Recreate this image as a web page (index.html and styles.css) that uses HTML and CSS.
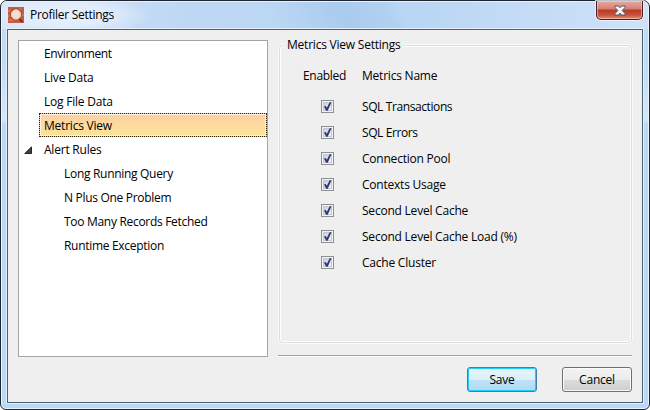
FILE: index.html
```html
<!DOCTYPE html>
<html lang="en">
<head>
<meta charset="utf-8">
<title>Profiler Settings</title>
<link rel="stylesheet" href="styles.css">
</head>
<body>
<svg class="defs" width="0" height="0">
  <linearGradient id="boxfill" x1="0" y1="0" x2="1" y2="1"><stop offset="0" stop-color="#c5cad2"/><stop offset="1" stop-color="#fafafa"/></linearGradient>
  <symbol id="check" viewBox="0 0 13 13">
    <rect x=".5" y=".5" width="12" height="12" fill="#f4f4f4" stroke="#8e8f8f"/>
    <rect x="2.5" y="2.5" width="8" height="8" fill="url(#boxfill)" stroke="#c4c8ce"/>
    <path d="M3 6.6l1.7-.6 1.2 1.7 2.6-5.2 2.1-.5-3.9 8.7H5.1z" fill="#31347c"/>
  </symbol>
</svg>
<div class="window">
  <header class="titlebar">
    <svg class="app-icon" width="16" height="16" viewBox="0 0 16 16">
      <rect width="16" height="16" fill="#cf5a36"/>
      <path d="M0 4h3M0 9h2M12 1v3M13 8h3M1 13h6" stroke="#e98b60"/>
      <path d="M11.5 12l3 3" stroke="#563c35" stroke-width="1.8"/>
      <circle cx="8" cy="7.5" r="5.6" fill="#f9dccb" stroke="#8e5145" stroke-width="1.2"/>
      <circle cx="8" cy="7.5" r="4.7" fill="none" stroke="#e9c3b2"/>
    </svg>
    <h1>Profiler Settings</h1>
    <div class="close">
      <svg width="12" height="11" viewBox="0 0 12 11"><path d="M1 1h3.4L6 2.8 7.6 1H11v1.5L8.2 5.5 11 8.5V10H7.6L6 8.2 4.4 10H1V8.5l2.8-3L1 2.5z" fill="#f7f7f7" stroke="#535666"/></svg>
    </div>
  </header>
  <main class="client">
    <nav class="tree">
      <div class="item"><span class="tight">Environment</span></div>
      <div class="item"><span>Live Data</span></div>
      <div class="item"><span>Log File Data</span></div>
      <div class="item selected"><span>Metrics View</span></div>
      <div class="item parent"><svg width="8" height="8" viewBox="0 0 8 8"><path d="M7.5.8v6.7H.8z" fill="#404040" stroke="#262626"/></svg><span>Alert Rules</span></div>
      <div class="item child"><span>Long Running Query</span></div>
      <div class="item child"><span>N Plus One Problem</span></div>
      <div class="item child"><span>Too Many Records Fetched</span></div>
      <div class="item child"><span>Runtime Exception</span></div>
    </nav>
    <section class="content">
      <fieldset class="group">
        <legend>Metrics View Settings</legend>
        <div class="row head"><span>Enabled</span><span>Metrics Name</span></div>
        <div class="row"><svg class="check"><use href="#check"/></svg><span class="tight">SQL Transactions</span></div>
        <div class="row"><svg class="check"><use href="#check"/></svg><span class="tight">SQL Errors</span></div>
        <div class="row"><svg class="check"><use href="#check"/></svg><span>Connection Pool</span></div>
        <div class="row"><svg class="check"><use href="#check"/></svg><span>Contexts Usage</span></div>
        <div class="row"><svg class="check"><use href="#check"/></svg><span>Second Level Cache</span></div>
        <div class="row"><svg class="check"><use href="#check"/></svg><span>Second Level Cache Load (%)</span></div>
        <div class="row"><svg class="check"><use href="#check"/></svg><span>Cache Cluster</span></div>
      </fieldset>
      <div class="rule"></div>
      <div class="buttons"><button class="save">Save</button><button>Cancel</button></div>
    </section>
  </main>
</div>
</body>
</html>
```
FILE: styles.css
```css
* { box-sizing: border-box; }
body {
  margin: 0;
  background: #fff;
  color: #000;
  font: 12px/16px "Open Sans", "Noto Sans", sans-serif;
  letter-spacing: -0.22px;
}
.defs { position: absolute; }
.window {
  width: 650px;
  height: 410px;
  padding: 0 6px 6px;
  border: 1px solid #20242e;
  border-radius: 7px 7px 6px 6px;
  background: linear-gradient(#c4dcf6 0, #bfdbf8 60px, #d5e7fa 118px, #b9d9fb 124px, #b9d9fb 100%);
  box-shadow: inset 0 0 0 1px #eef6fd;
}
.titlebar {
  display: flex;
  align-items: flex-start;
  height: 28px;
  margin: 0 -5px;
  padding: 0 5px;
  background:
    radial-gradient(ellipse 90px 22px at 60px 14px, #e8f1fc 0, #e1edfb 50%, transparent 100%),
    linear-gradient(65deg, transparent 42%, #a9cbef 53%, #b2d1f1 60%, transparent 62%),
    linear-gradient(90deg, #d0e2f7 0, #bdd7f4 30%, #bad6f4 65%, #cfe2f8 100%);
}
.titlebar { box-shadow: inset 0 1px #e8f2fd; border-radius: 5px 5px 0 0; }
.app-icon { margin: 6px 0 0 1px; }
h1 {
  margin: 5px 0 0 6px;
  font-size: 12px;
  line-height: 17px;
  font-weight: 400;
  letter-spacing: -0.28px;
}
.close {
  display: flex;
  justify-content: center;
  align-items: center;
  width: 47px;
  height: 19px;
  margin: 0 0 0 auto;
  border: 1px solid #4b1d24;
  border-top: 0;
  border-radius: 0 0 5px 5px;
  background: linear-gradient(#e6aaa0 0, #d77f73 8px, #b93b27 9px, #c8503a 14px, #e29073 18px);
  box-shadow: inset 0 0 0 1px rgba(255,220,210,.5), 0 0 0 1px rgba(240,247,255,.75);
}
.client {
  display: flex;
  height: 374px;
  padding: 10px;
  border: 1px solid #4b626f;
  background: #efefef;
  box-shadow: 0 0 0 1px #e4f1fc;
}
.tree {
  width: 250px;
  height: 317px;
  border: 1px solid #a5a5a5;
  background: #fff;
}
.item {
  display: flex;
  align-items: center;
  height: 24px;
  padding: 2px 0 0 25px;
  white-space: pre;
}
.selected {
  margin-left: 20px;
  padding-left: 4px;
  border: 1px dotted #302204;
  background: linear-gradient(#ffd0a6, #fae496) padding-box, #f2c94a border-box;
  box-shadow: inset 0 0 0 1px #fff3dc;
}
.parent { padding-left: 5px; }
.parent svg { margin: -1px 12px 0 0; }
.child { padding-left: 45px; letter-spacing: -0.3px; }
.tight { letter-spacing: -0.4px; }
.content {
  width: 354px;
  margin-left: 10px;
}
.group {
  height: 306px;
  margin: -3px 0 0 1px;
  padding: 0 0 0 22px;
  border: 1px solid #d5dfe5;
  border-radius: 4px;
  box-shadow: inset 0 0 0 1px #fff, 0 0 0 1px #fafafa;
}
legend {
  margin-left: -17px;
  padding: 0 4px 0 2px;
  background: #efefef;
}
.row {
  display: flex;
  align-items: center;
  height: 26px;
}
.row.head { height: 32px; margin-top: 7px; margin-bottom: 2px; }
.head span:first-child { width: 59px; padding-left: 1px; margin-right: 1px; letter-spacing: -0.3px; }
.check {
  width: 13px;
  height: 13px;
  margin: -2px 28px 0 19px;
}
.rule {
  height: 2px;
  margin-top: 12px;
  border-top: 1px solid #a0a0a0;
  border-bottom: 1px solid #fff;
}
.buttons {
  display: flex;
  justify-content: flex-end;
  gap: 25px;
  margin-top: 10px;
}
button {
  width: 70px;
  height: 25px;
  padding: 0;
  border: 1px solid #707070;
  border-radius: 3px;
  background: linear-gradient(#f3f3f3 0, #ebebeb 50%, #dddddd 50%, #cdcdcd 100%);
  box-shadow: inset 0 0 0 1px #fafafa;
  color: #000;
  font: inherit;
  letter-spacing: inherit;
}
.save {
  border-color: #3c7fb1;
  background: linear-gradient(#e7f4fb 0, #d9effa 50%, #bfe3f6 50%, #afdaf2 100%);
  box-shadow: inset 0 0 0 1px #20cdf7;
}
```
